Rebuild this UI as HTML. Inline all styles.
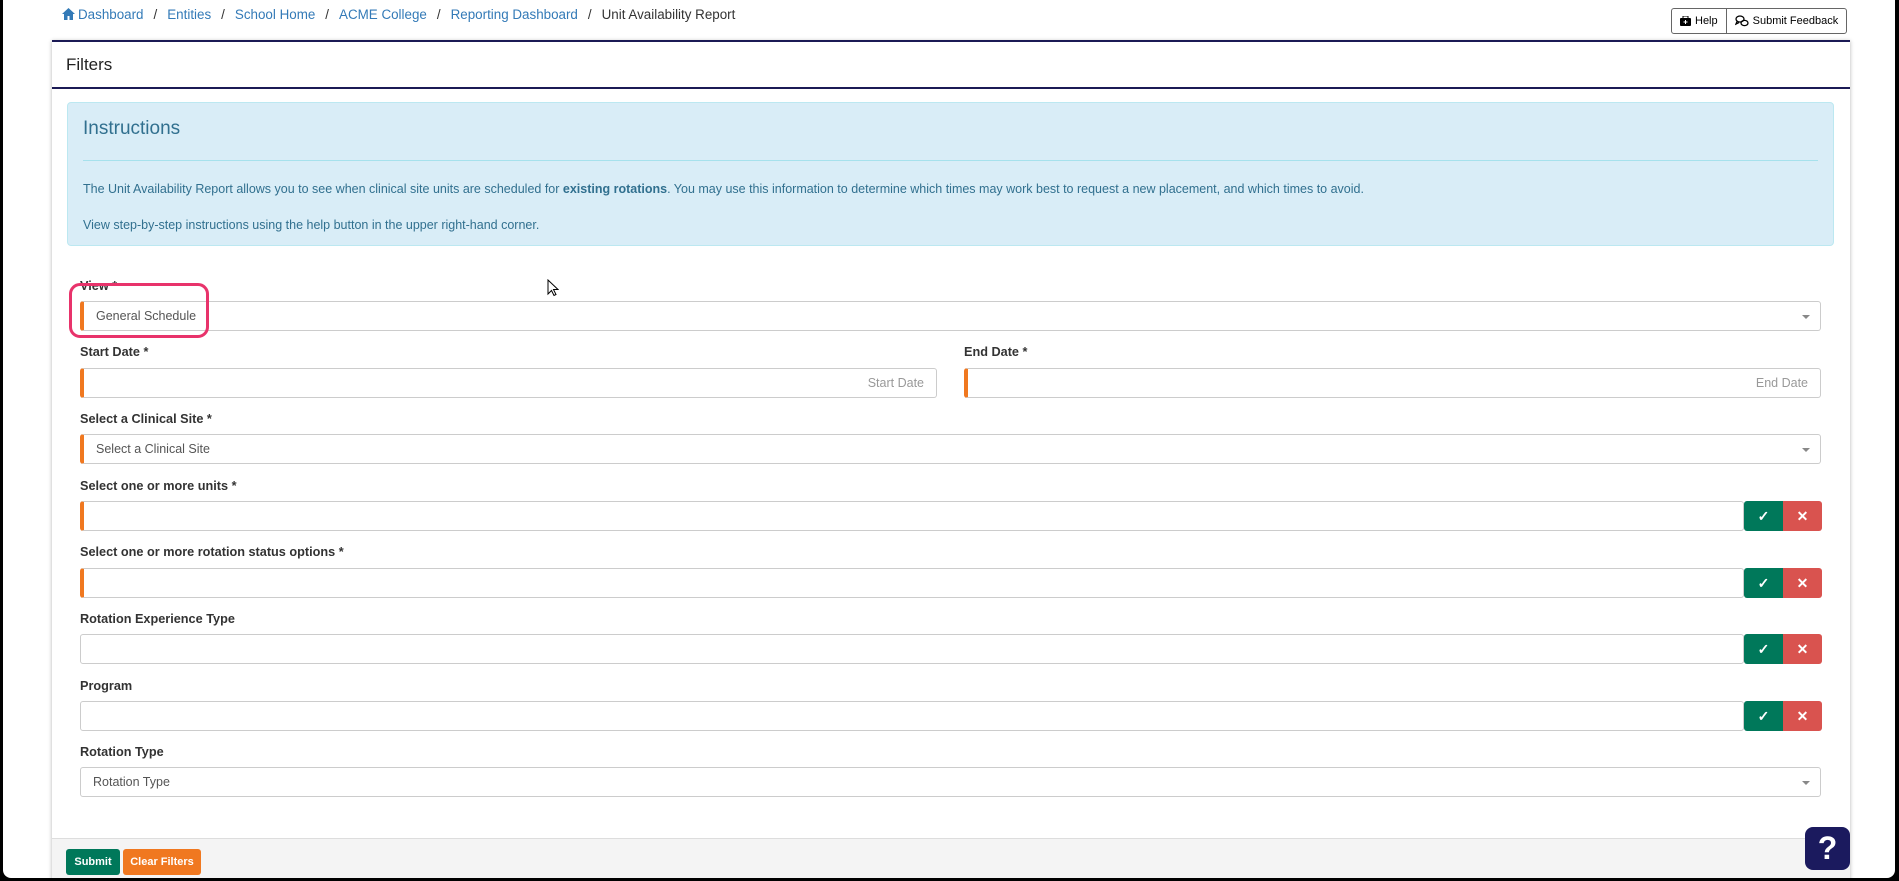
<!DOCTYPE html>
<html><head><meta charset="utf-8"><style>
*{box-sizing:border-box;margin:0;padding:0}
html,body{width:1899px;height:881px;overflow:hidden;background:#000;font-family:"Liberation Sans",Arial,sans-serif}
#page{position:absolute;left:3px;top:0;width:1892px;height:878px;background:#fff;border-radius:0 0 8px 8px;overflow:hidden}
.a{position:absolute}
.bc{top:7px;left:59px;font-size:13.4px;color:#337ab7;white-space:nowrap}
.bc span.s{color:#333;margin:0 10px}
.bc .cur{color:#333}
.hb{top:8px;left:1668px;height:26px;border:1px solid #666;border-radius:3px;display:flex;font-size:11px;color:#000;background:#fff}
.hb div{padding:0 8px;display:flex;align-items:center;gap:4px}
.card{left:49px;top:40px;width:1798px;height:850px;border-top:2px solid #1b1a55;box-shadow:0 1px 4px rgba(0,0,0,.3);background:#fff}
.hd{position:absolute;left:0;top:0;width:100%;height:47px;border-bottom:2px solid #1b1a55;font-size:17px;color:#222;padding:13px 0 0 14px}
.ins{left:64px;top:102px;width:1767px;height:144px;background:#d9edf7;border:1px solid #bce8f1;border-radius:4px;color:#31708f}
.ins h3{position:absolute;left:15px;top:15px;font-size:19px;font-weight:normal}
.ins hr{position:absolute;left:15px;right:15px;top:57px;border:0;border-top:1px solid #a6e1ec}
.ins p{position:absolute;left:15px;font-size:12.5px;white-space:nowrap}
.lb{font-size:12.7px;font-weight:bold;color:#333;left:77px}
.in{height:30px;border:1px solid #ccc;border-radius:3px;background:#fff;font-size:12.5px;color:#555;padding:7px 12px}
.or{border-left:4px solid #f07820}
.ph{text-align:right;color:#999}
.car{position:absolute;right:10px;top:13px;border:4px solid transparent;border-top:4px solid #888;border-bottom:0;width:0}
.bt{width:39px;height:30px;color:#fff;font-size:14px;font-weight:bold;display:flex;align-items:center;justify-content:center}
.ok{background:#00785a;border-radius:3px 0 0 3px}
.no{background:#d9534f;border-radius:0 3px 3px 0}
.ft{left:49px;top:838px;width:1798px;height:50px;background:#f4f4f4;border-top:1px solid #ddd}
.fb{top:849px;height:26px;color:#fff;font-size:11px;font-weight:bold;border-radius:3px;display:flex;align-items:center;justify-content:center}
</style></head><body><div id="page">
<div class="a bc"><svg width="13" height="12" viewBox="0 0 13 12" style="vertical-align:-1px;margin-right:3px"><path d="M6.5 0L0 6h2v6h3.5V8h2v4H11V6h2z" fill="#337ab7"/></svg>Dashboard<span class="s">/</span>Entities<span class="s">/</span>School Home<span class="s">/</span>ACME College<span class="s">/</span>Reporting Dashboard<span class="s">/</span><span class="cur">Unit Availability Report</span></div>
<div class="a hb"><div style="border-right:1px solid #666"><svg width="11" height="10" viewBox="0 0 11 10"><rect x="0" y="2" width="11" height="8" rx="1" fill="#000"/><rect x="3" y="0" width="5" height="3" fill="none" stroke="#000"/><path d="M5.5 4v4M3.5 6h4" stroke="#fff"/></svg>Help</div><div><svg width="14" height="12" viewBox="0 0 14 12" fill="none" stroke="#000" stroke-width="1.3"><ellipse cx="5" cy="4" rx="4" ry="3"/><path d="M2 6.5L1 9l3-1.5"/><ellipse cx="9.5" cy="8" rx="3.5" ry="2.6"/></svg>Submit Feedback</div></div>
<div class="a card"><div class="hd">Filters</div></div>
<div class="a ins"><h3>Instructions</h3><hr><p style="top:79px">The Unit Availability Report allows you to see when clinical site units are scheduled for <b>existing rotations</b>. You may use this information to determine which times may work best to request a new placement, and which times to avoid.</p><p style="top:115px">View step-by-step instructions using the help button in the upper right-hand corner.</p></div>

<div class="a lb" style="top:279px">View *</div>
<div class="a in or" style="left:77px;top:301px;width:1741px">General Schedule<span class="car"></span></div>
<div class="a" style="left:66px;top:283px;width:140px;height:55px;border:3px solid #e8336b;border-radius:11px"></div>
<svg class="a" style="left:544px;top:279px" width="12" height="18" viewBox="0 0 12 18"><path d="M1 1v14l3.5-3.5 2.5 5 2-1-2.5-5H11z" fill="#fff" stroke="#000"/></svg>

<div class="a lb" style="top:345px">Start Date *</div>
<div class="a lb" style="top:345px;left:961px">End Date *</div>
<div class="a in or ph" style="left:77px;top:368px;width:857px">Start Date</div>
<div class="a in or ph" style="left:961px;top:368px;width:857px">End Date</div>

<div class="a lb" style="top:412px">Select a Clinical Site *</div>
<div class="a in or" style="left:77px;top:434px;width:1741px">Select a Clinical Site<span class="car"></span></div>

<div class="a lb" style="top:479px">Select one or more units *</div>
<div class="a in or" style="left:77px;top:501px;width:1664px"></div>
<div class="a bt ok" style="left:1741px;top:501px">✓</div><div class="a bt no" style="left:1780px;top:501px">✕</div>

<div class="a lb" style="top:545px">Select one or more rotation status options *</div>
<div class="a in or" style="left:77px;top:568px;width:1664px"></div>
<div class="a bt ok" style="left:1741px;top:568px">✓</div><div class="a bt no" style="left:1780px;top:568px">✕</div>

<div class="a lb" style="top:612px">Rotation Experience Type</div>
<div class="a in" style="left:77px;top:634px;width:1664px"></div>
<div class="a bt ok" style="left:1741px;top:634px">✓</div><div class="a bt no" style="left:1780px;top:634px">✕</div>

<div class="a lb" style="top:679px">Program</div>
<div class="a in" style="left:77px;top:701px;width:1664px"></div>
<div class="a bt ok" style="left:1741px;top:701px">✓</div><div class="a bt no" style="left:1780px;top:701px">✕</div>

<div class="a lb" style="top:745px">Rotation Type</div>
<div class="a in" style="left:77px;top:767px;width:1741px">Rotation Type<span class="car"></span></div>

<div class="a ft"></div>
<div class="a fb" style="left:63px;width:54px;background:#00785a">Submit</div>
<div class="a fb" style="left:120px;width:78px;background:#f07820">Clear Filters</div>
<div class="a" style="left:1802px;top:827px;width:45px;height:43px;background:#1b1a5e;border-radius:8px;color:#fff;font-size:32px;font-weight:bold;text-align:center;line-height:43px">?</div>
</div></body></html>
